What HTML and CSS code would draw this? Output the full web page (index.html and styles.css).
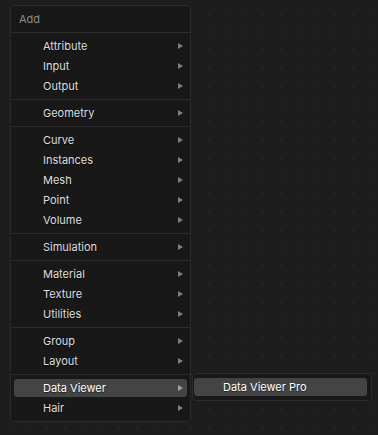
FILE: index.html
```html
<!DOCTYPE html>
<html>
<head>
<meta charset="utf-8">
<link rel="stylesheet" href="styles.css">
</head>
<body>
<div class="canvas">
  <div class="menu">
    <div class="menu-title">Add</div>
    <div class="group">
      <div class="item"><span>Attribute</span><i class="arrow"></i></div>
      <div class="item"><span>Input</span><i class="arrow"></i></div>
      <div class="item"><span>Output</span><i class="arrow"></i></div>
    </div>
    <div class="group">
      <div class="item"><span>Geometry</span><i class="arrow"></i></div>
    </div>
    <div class="group">
      <div class="item"><span>Curve</span><i class="arrow"></i></div>
      <div class="item"><span>Instances</span><i class="arrow"></i></div>
      <div class="item"><span>Mesh</span><i class="arrow"></i></div>
      <div class="item"><span>Point</span><i class="arrow"></i></div>
      <div class="item"><span>Volume</span><i class="arrow"></i></div>
    </div>
    <div class="group">
      <div class="item"><span>Simulation</span><i class="arrow"></i></div>
    </div>
    <div class="group">
      <div class="item"><span>Material</span><i class="arrow"></i></div>
      <div class="item"><span>Texture</span><i class="arrow"></i></div>
      <div class="item"><span>Utilities</span><i class="arrow"></i></div>
    </div>
    <div class="group">
      <div class="item"><span>Group</span><i class="arrow"></i></div>
      <div class="item"><span>Layout</span><i class="arrow"></i></div>
    </div>
    <div class="group">
      <div class="item active"><span>Data Viewer</span><i class="arrow"></i></div>
      <div class="item"><span>Hair</span><i class="arrow"></i></div>
    </div>
  </div>
  <div class="submenu">
    <div class="item active"><span>Data Viewer Pro</span></div>
  </div>
</div>
</body>
</html>
```
FILE: styles.css
```css
html, body {
  margin: 0;
  padding: 0;
}
body {
  width: 378px;
  height: 435px;
  overflow: hidden;
  background-color: #1d1d1d;
  background-image: radial-gradient(circle at 1px 1px, #262626 1px, transparent 1.3px);
  background-size: 18px 18px;
  background-position: 10px 13px;
  font-family: Inter, "DejaVu Sans", sans-serif;
  font-size: 11px;
  color: #dedede;
}
.canvas {
  position: relative;
  width: 378px;
  height: 435px;
  padding-top: 5px;
  box-sizing: border-box;
}
.menu {
  margin-left: 10px;
  width: 181px;
  box-sizing: border-box;
  background: #181818;
  border: 1px solid #2b2b2b;
  border-radius: 4px;
}
.menu-title {
  height: 26px;
  line-height: 26px;
  padding-left: 8px;
  color: #8a8a8a;
  border-bottom: 1px solid #2d2d2d;
}
.group {
  display: flex;
  flex-direction: column;
  padding: 3px 0;
  border-bottom: 1px solid #2d2d2d;
}
.group:last-child {
  border-bottom: none;
}
.item {
  display: flex;
  align-items: center;
  justify-content: space-between;
  height: 18px;
  margin: 1px 3px;
  padding: 0 4px 0 29px;
  border-radius: 3px;
  text-shadow: 0 1px 1px rgba(0,0,0,0.5);
}
.item.active {
  background: #444444;
  color: #ffffff;
}
.arrow {
  display: block;
  width: 0;
  height: 0;
  border-left: 5px solid #7e7e7e;
  border-top: 3px solid transparent;
  border-bottom: 3px solid transparent;
}
.item.active .arrow {
  border-left-color: #a0a0a0;
}
.submenu {
  position: absolute;
  left: 192px;
  top: 373px;
  width: 180px;
  box-sizing: border-box;
  background: #181818;
  border: 1px solid #2b2b2b;
  border-radius: 4px;
  padding: 4px 4px 4px 1px;
}
.submenu .item {
  margin: 0;
}
```
